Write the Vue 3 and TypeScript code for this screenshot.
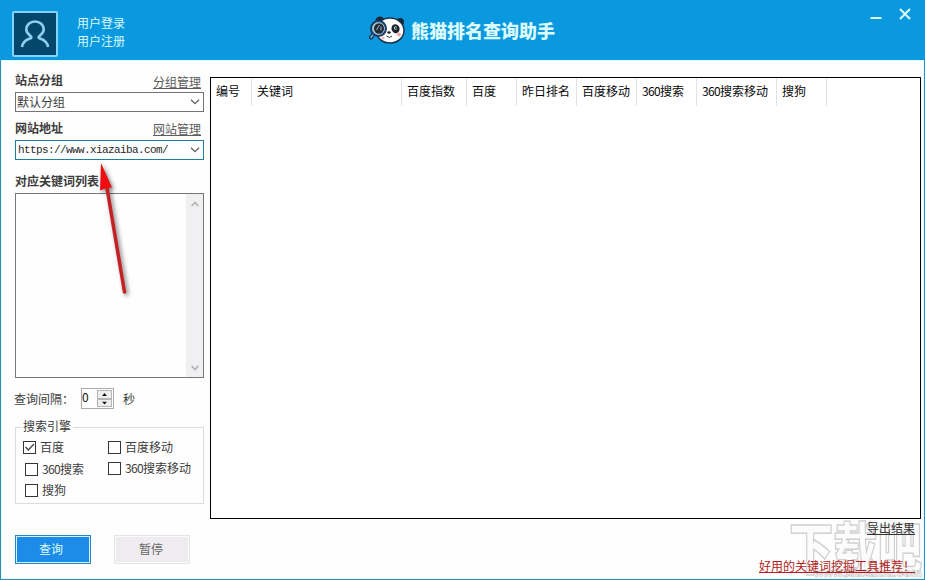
<script setup lang="ts">
import { ref } from 'vue'

interface Column { digits?: string; label: string; width: number }
interface Engine { digits?: string; label: string; side: 'left' | 'right'; row: number; checked: boolean }

const columns: Column[] = [
  { label: '编号', width: 41 },
  { label: '关键词', width: 150 },
  { label: '百度指数', width: 65 },
  { label: '百度', width: 50 },
  { label: '昨日排名', width: 60 },
  { label: '百度移动', width: 60 },
  { digits: '360', label: '搜索', width: 60 },
  { digits: '360', label: '搜索移动', width: 80 },
  { label: '搜狗', width: 50 },
]

const engines = ref<Engine[]>([
  { label: '百度', side: 'left', row: 1, checked: true },
  { label: '百度移动', side: 'right', row: 1, checked: false },
  { digits: '360', label: '搜索', side: 'left', row: 2, checked: false },
  { digits: '360', label: '搜索移动', side: 'right', row: 2, checked: false },
  { label: '搜狗', side: 'left', row: 3, checked: false },
])
</script>

<template>
  <div class="window">
    <header class="titlebar">
      <div class="avatar">
        <svg width="30" height="30" viewBox="0 0 30 30">
          <path d="M2 28c.5-4.500 3.500-7 8-8.500 1.800-.6 1.800-1.700.3-2.700C8 15 6.300 13.500 6.300 10.500c0-4.700 3.700-8 8.700-8s8.700 3.300 8.700 8c0 3-1.700 4.500-4 6.300-1.500 1-1.500 2.100.3 2.700 4.500 1.500 7.500 4 8 8.500" />
        </svg>
      </div>
      <nav class="account"><span>用户登录</span><span>用户注册</span></nav>
      <div class="brand">
        <svg class="panda" width="36" height="28" viewBox="0 0 36 28">
          <circle cx="11" cy="5" r="4.500" fill="#152838" />
          <circle cx="31" cy="6" r="4" fill="#152838" />
          <ellipse cx="21" cy="14.500" rx="14" ry="12.500" fill="#fff" stroke="#17334a" stroke-width="1.500" />
          <ellipse cx="26.500" cy="12.500" rx="4" ry="4.500" fill="#182029" transform="rotate(-20 27 12.500)" />
          <circle cx="26.500" cy="12" r="1.700" fill="#c9e5e8" /><circle cx="26.800" cy="12" r="1" fill="#172029" />
          <path d="M4.500 18l-2.500 3.500" stroke="#193249" stroke-width="4" stroke-linecap="round" />
          <path d="M4.500 18l-2.500 3.500" stroke="#77b2dc" stroke-width="1.500" stroke-linecap="round" />
          <circle cx="9.500" cy="12.500" r="7.500" fill="#a3c9d7" stroke="#193b66" stroke-width="2" />
          <ellipse cx="10" cy="12.500" rx="5" ry="5.200" fill="#202a34" />
          <path d="M7.500 14l3-5M12 10.500v4" stroke="#a8bcc3" stroke-width="1" />
          <ellipse cx="20" cy="16.500" rx="1.800" ry="1.200" fill="#20252c" />
          <path d="M17.500 20q2.800 3 5.500 0" fill="none" stroke="#2a3035" stroke-width="1" />
          <circle cx="14" cy="22" r="1.600" fill="#f3b5b5" /><circle cx="30" cy="18.500" r="1.900" fill="#f0a9a9" />
        </svg>
        <h1>熊猫排名查询助手</h1>
      </div>
      <div class="controls">
        <svg width="12" height="12" viewBox="0 0 12 12"><path d="M.5 10h11" /></svg>
        <svg width="12" height="12" viewBox="0 0 12 12"><path d="M1 1l10 10M11 1L1 11" /></svg>
      </div>
    </header>

    <main class="body">
      <aside class="sidebar">
        <div class="heading"><b>站点分组</b><a>分组管理</a></div>
        <div class="select">
          <span>默认分组</span>
          <svg width="10" height="6" viewBox="0 0 10 6"><path d="M1 .7l4 4 4-4" /></svg>
        </div>
        <div class="heading second"><b>网站地址</b><a>网站管理</a></div>
        <div class="select active">
          <span class="url">https://www.xiazaiba.com/</span>
          <svg width="10" height="6" viewBox="0 0 10 6"><path d="M1 .7l4 4 4-4" /></svg>
        </div>
        <div class="heading third"><b>对应关键词列表</b></div>
        <div class="listbox">
          <div class="scrollbar">
            <svg width="8" height="6" viewBox="0 0 8 6"><path d="M.7 5L4 1.500 7.300 5" /></svg>
            <svg width="8" height="6" viewBox="0 0 8 6"><path d="M.7 1L4 4.500 7.300 1" /></svg>
          </div>
        </div>
        <div class="interval">
          <span class="caption">查询间隔：</span>
          <div class="spinner">
            <span>0</span>
            <div class="steps">
              <svg viewBox="0 0 13 8"><path d="M3.500 6h6l-3-3.500z" /></svg>
              <svg viewBox="0 0 13 8"><path d="M3.500 2h6l-3 3.500z" /></svg>
            </div>
          </div>
          <span>秒</span>
        </div>
        <section class="group">
          <div class="legend"><span>搜索引擎</span></div>
          <div class="options">
            <div
              v-for="(item, i) in engines" :key="i" class="option"
              :class="[item.side, 'row' + item.row]" @click="item.checked = !item.checked"
            >
              <i class="box"><svg v-if="item.checked" viewBox="0 0 11 11"><path d="M1.500 5l2.800 3L10 2" /></svg></i>
              <span><span v-if="item.digits" class="digits">{{ item.digits }}</span>{{ item.label }}</span>
            </div>
          </div>
        </section>
        <div class="buttons">
          <button class="primary">查询</button>
          <button>暂停</button>
        </div>
      </aside>

      <section class="content">
        <div class="table">
          <div class="thead">
            <div v-for="(c, i) in columns" :key="i" class="th" :style="{ width: c.width + 'px' }">
              <span v-if="c.digits" class="digits">{{ c.digits }}</span>{{ c.label }}
            </div>
          </div>
        </div>
        <footer class="footer">
          <a class="export">导出结果</a>
          <a class="promo">好用的关键词挖掘工具推荐！</a>
        </footer>
      </section>
    </main>

    <div class="watermark">
      <svg width="137" height="60" viewBox="0 0 137 60">
        <text class="mark" transform="translate(0 49) scale(1 1.12)" x="1" y="0" textLength="133" lengthAdjust="spacingAndGlyphs">下载吧</text>
        <text class="site" x="26" y="57" textLength="108" lengthAdjust="spacingAndGlyphs">www.xiazaiba.com</text>
      </svg>
    </div>
    <svg class="pointer" width="50" height="150" viewBox="0 0 50 150">
      <path class="shaft" d="M13 32L30.500 136" />
      <path class="tip" d="M7 7L6 34.500l6.500-2.500L18 31.500z" />
    </svg>
  </div>
</template>

<style>
body { margin: 0; overflow: hidden; }
</style>

<style scoped>
* { box-sizing: border-box; }
.window {
  position: relative; width: 925px; height: 580px; display: flex; flex-direction: column;
  background: #fefefe; color: #3c3c3c;
  font: 12px/16px "Noto Sans CJK SC", sans-serif;
}
.window::after {
  content: ""; position: absolute; inset: 60px 0 0; pointer-events: none;
  border: solid #388ba8; border-width: 0 1px 1px; border-right-color: #1699dc;
  box-shadow: inset 0 0 0 1px #dcfbff;
}
.titlebar {
  flex: none; height: 60px; display: flex; align-items: flex-start; background: #0a98df;
  padding: 11px 14px 0 12px; color: #d9fbff;
}
.avatar {
  width: 46px; height: 46px; border: 2px solid #82d2fb; border-radius: 2px; background: #03486c;
  display: flex; align-items: center; justify-content: center;
}
.avatar path { fill: none; stroke: #8fceee; stroke-width: 2.6; }
.account { display: flex; flex-direction: column; gap: 2px; margin: 4px 0 0 19px; width: 50px; }
.brand { display: flex; align-items: center; gap: 6px; margin: 4px 0 0 242px; }
.brand h1 { margin: 0; font-size: 18px; line-height: 30px; font-weight: 900; white-space: nowrap; color: #dbfcff; }
.controls { margin: -3px 0 0 auto; display: flex; gap: 17px; }
.controls path { stroke: #dbffff; stroke-width: 2; }

.body { flex: 1; display: flex; min-height: 0; }
.sidebar { width: 210px; padding: 12px 6px 0 15px; display: flex; flex-direction: column; }
.heading { display: flex; justify-content: space-between; height: 20px; padding-right: 3px; flex: none; }
.heading a { text-decoration: underline; text-underline-offset: 1px; color: #5c5c5c; padding-top: 2px; }
.second { margin-top: 8px; }
.second a { padding-top: 1px; }
.third { margin-top: 13px; }
.select {
  flex: none; height: 20px; border: 1px solid #747474; background: #fff; padding: 0 3px 0 1px;
  display: flex; align-items: center; justify-content: space-between;
}
.select > span { margin-top: -1px; }
.select svg path { fill: none; stroke: #606060; stroke-width: 1.3; }
.active { border-color: #217b9f; }
.url { font: 11px/16px "Liberation Mono", monospace; letter-spacing: -0.6px; padding-left: 1px; color: #292929; }
.listbox { flex: none; height: 185px; border: 1px solid #777; display: flex; justify-content: flex-end; }
.scrollbar {
  width: 17px; background: #f0eff1; padding: 7px 0 6px; display: flex; flex-direction: column;
  align-items: center; justify-content: space-between;
}
.scrollbar path { fill: none; stroke: #b3b3b3; stroke-width: 1.7; }
.interval { display: flex; height: 21px; margin: 10px 0 0 -1px; align-items: center; flex: none; }
.caption { width: 67px; white-space: nowrap; }
.spinner { width: 33px; height: 21px; border: 1px solid #aaa; display: flex; justify-content: space-between; padding: 1px 1px 1px 0; margin-right: 9px; color: #111; line-height: 14px; }
.steps { width: 15px; display: flex; flex-direction: column; }
.steps svg { display: block; height: 50%; width: 100%; background: #eee; border: 1px solid #b5b5b5; fill: #111; }
.group { margin-top: 18px; height: 77px; border: 1px solid #dcdcdc; flex: none; }
.legend { height: 12px; }
.legend span { display: inline-block; background: #fefefe; margin: -10px 0 0 5px; padding: 0 2px; vertical-align: top; }
.options { display: grid; grid-template-columns: 85px 1fr; grid-template-rows: 21px 22px 21px; padding-left: 7px; }
.option { display: flex; align-items: flex-start; gap: 4px; white-space: nowrap; line-height: 12px; }
.left { grid-column: 1; }
.right { grid-column: 2; }
.row1 { grid-row: 1; padding-top: 1px; }
.row2 { grid-row: 2; padding-top: 1px; }
.row3 { grid-row: 3; padding-top: 1px; }
.left.row2, .left.row3 { padding-left: 2px; }
.left.row2 { padding-top: 2px; }
.box { width: 13px; height: 13px; border: 1px solid #363636; background: #fff; }
.box svg { display: block; width: 11px; height: 11px; }
.box path { fill: none; stroke: #454545; stroke-width: 1.3; }
.digits { letter-spacing: -0.66px; }
.buttons { display: flex; gap: 23px; margin-top: 31px; }
button {
  width: 76px; height: 29px; padding: 0 2px 2px 0; border: 1px solid #e5e5e5; box-shadow: inset 0 0 0 1px #fafafa;
  background: #eeecee; color: #686868; font: inherit;
}
.primary { background: #1d8ce8; border-color: #2788bc; box-shadow: inset 0 0 0 1px #d0f4ff; color: #dffbff; padding-right: 4px; }

.content { flex: 1; padding: 17px 4px 0 0; }
.table { height: 442px; border: 1px solid #000; background: #fff; }
.thead { display: flex; height: 28px; }
.th { flex: none; border-right: 1px solid #e2e2e2; padding: 5px 0 0 5px; color: #080808; white-space: nowrap; }
.footer { position: relative; z-index: 2; display: flex; flex-direction: column; align-items: flex-end; padding: 1px 6px 0 0; }
.footer a { text-decoration: underline; text-underline-offset: 1px; }
.export { color: #333; }
.promo { color: #b21c20; margin-top: 22px; }

.watermark { position: absolute; left: 788px; top: 520px; z-index: 1; pointer-events: none; height: 60px; }
.mark { font-size: 50px; font-weight: 900; fill: #fcfcfc; stroke: #d0d0d0; stroke-width: 1.3; }
.site { font: bold 12px "Liberation Sans", sans-serif; fill: #fff; stroke: #c9c9c9; stroke-width: .7; }
.pointer { position: absolute; left: 94px; top: 156px; pointer-events: none; filter: drop-shadow(2px 2px 2px rgba(0, 0, 0, .5)); }
.shaft { stroke: #c52024; stroke-width: 3.5; stroke-linecap: round; }
.tip { fill: #f00d10; }
</style>
